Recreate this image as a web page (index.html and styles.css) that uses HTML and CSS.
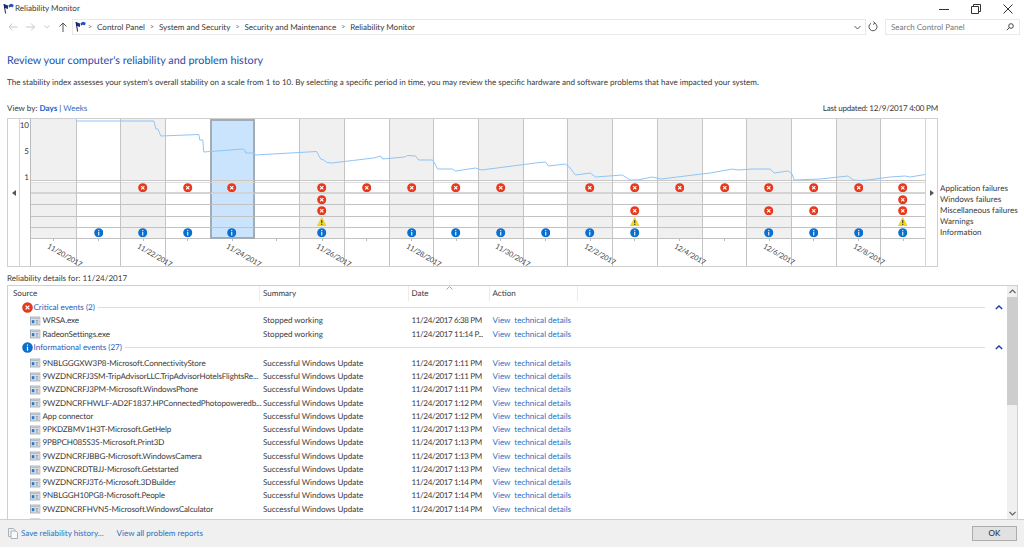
FILE: index.html
```html
<!DOCTYPE html>
<html lang="en">
<head>
<meta charset="utf-8">
<title>Reliability Monitor</title>
<link rel="stylesheet" href="styles.css">
</head>
<body>
<svg class="defs" width="0" height="0" aria-hidden="true">
  <defs>
    <symbol id="err" viewBox="0 0 10 10"><circle cx="5" cy="5" r="4.8" fill="#e8391d"/><path d="M3.300 3.300l3.400 3.400M6.700 3.300L3.300 6.700" stroke="#fff" stroke-width="1.200"/></symbol>
    <symbol id="inf" viewBox="0 0 10 10"><circle cx="5" cy="5" r="4.8" fill="#0a70d0"/><path d="M5 2.200v1.200M5 4.300v3.600" stroke="#fff" stroke-width="1.100"/></symbol>
    <symbol id="war" viewBox="0 0 10 10"><path d="M5 .4L9.800 9.600H.2z" fill="#f6d90f" stroke="#d8b400" stroke-width=".4"/><path d="M5 3.200v3.400M5 7.400v1.100" stroke="#333" stroke-width="1.100"/></symbol>
    <symbol id="flag" viewBox="0 0 12 11"><path d="M2 1l4 1.500L6 6 2 4.700z" fill="#1c2f8e"/><path d="M6.500 2.300L9 .8l2.700 1-.7 2.400-2.400-.5-1.600 1z" fill="#2450b8"/><path d="M2 1l1.600 9.500" stroke="#16235f" stroke-width="1" fill="none"/></symbol>
    <symbol id="app" viewBox="0 0 12 10"><rect x=".5" y=".5" width="11" height="9" fill="#e4e8ee" stroke="#9aa3ad"/><rect x="1.500" y="1.500" width="9" height="1.400" fill="#b5bdc7"/><rect x="2" y="4" width="3" height="3.600" fill="#2c78c8"/><path d="M6.500 4.400h3M6.500 6h3M6.500 7.500h3" stroke="#8d97a3"/></symbol>
  </defs>
</svg>

<div class="titlebar">
  <div class="title-left"><svg class="flag"><use href="#flag"/></svg><span>Reliability Monitor</span></div>
  <div class="win-btns">
    <svg width="10" height="10" viewBox="0 0 10 10"><path d="M0 5.500h10" stroke="#333"/></svg>
    <svg width="10" height="10" viewBox="0 0 10 10"><path d="M.5 2.500h7v7h-7zM2.500 2.500v-2h7v7h-2" fill="none" stroke="#333"/></svg>
    <svg width="10" height="10" viewBox="0 0 10 10"><path d="M.5.5l9 9M9.500.5l-9 9" stroke="#333"/></svg>
  </div>
</div>

<div class="navbar">
  <div class="nav-btns">
    <svg width="10" height="10" viewBox="0 0 10 10"><path d="M1 5h8.500M4.500 1.500L1 5l3.500 3.500" fill="none" stroke="#c8c8c8"/></svg>
    <svg width="10" height="10" viewBox="0 0 10 10"><path d="M0 5h8.500M5 1.500L8.500 5 5 8.500" fill="none" stroke="#c8c8c8"/></svg>
    <svg width="6" height="6" viewBox="0 0 6 6"><path d="M.5 1.500L3 4l2.500-2.500" fill="none" stroke="#c8c8c8"/></svg>
    <svg width="10" height="10" viewBox="0 0 10 10"><path d="M5 10V1M1.500 4.500L5 1l3.500 3.500" fill="none" stroke="#555"/></svg>
  </div>
  <div class="address">
    <svg class="flag"><use href="#flag"/></svg>
    <span class="sep">&gt;</span><span>Control Panel</span>
    <span class="sep">&gt;</span><span>System and Security</span>
    <span class="sep">&gt;</span><span>Security and Maintenance</span>
    <span class="sep">&gt;</span><span>Reliability Monitor</span>
    <svg class="addr-drop" width="7" height="5" viewBox="0 0 7 5"><path d="M.5 1L3.500 4l3-3" fill="none" stroke="#555"/></svg>
  </div>
  <svg class="refresh" width="10" height="11" viewBox="0 0 10 11"><path d="M3 2.300a4 4 0 1 0 4 0M5.500 .5L7 2.300 5 3.500" fill="none" stroke="#555"/></svg>
  <div class="search"><span>Search Control Panel</span>
    <svg width="8" height="8" viewBox="0 0 8 8"><circle cx="5" cy="3" r="2.300" fill="none" stroke="#444"/><path d="M3.300 4.700L.8 7.200" stroke="#444"/></svg>
  </div>
</div>

<main class="content">
  <h1 class="heading">Review your computer's reliability and problem history</h1>
  <p class="intro">The stability index assesses your system's overall stability on a scale from 1 to 10. By selecting a specific period in time, you may review the specific hardware and software problems that have impacted your system.</p>
  <div class="viewby">
    <div>View by: <a class="link strong">Days</a> | <a class="link">Weeks</a></div>
    <div class="updated">Last updated: 12/9/2017 4:00 PM</div>
  </div>

  <div class="chart-row">
    <div class="chart">
      <div class="arrow-col"><svg width="4" height="6" viewBox="0 0 4 6"><path d="M4 0v6L0 3z" fill="#555"/></svg></div>
      <div class="yaxis"><span>10</span><span>5</span><span>1</span></div>
      <div class="plot">
        <div class="col g"><div class="gr"></div><div class="band"></div><div class="cell"></div><div class="cell"></div><div class="cell"></div><div class="cell"></div><div class="cell"></div><div class="dt"><i></i><span>11/20/2017</span></div></div>
        <div class="col"><div class="gr"></div><div class="band"></div><div class="cell"></div><div class="cell"></div><div class="cell"></div><div class="cell"></div><div class="cell"><svg><use href="#inf"/></svg></div><div class="dt"><i></i></div></div>
        <div class="col g"><div class="gr"></div><div class="band"></div><div class="cell"><svg><use href="#err"/></svg></div><div class="cell"></div><div class="cell"></div><div class="cell"></div><div class="cell"><svg><use href="#inf"/></svg></div><div class="dt"><i></i><span>11/22/2017</span></div></div>
        <div class="col"><div class="gr"></div><div class="band"></div><div class="cell"><svg><use href="#err"/></svg></div><div class="cell"></div><div class="cell"></div><div class="cell"></div><div class="cell"><svg><use href="#inf"/></svg></div><div class="dt"><i></i></div></div>
        <div class="col sel"><div class="gr"></div><div class="band"></div><div class="cell"><svg><use href="#err"/></svg></div><div class="cell"></div><div class="cell"></div><div class="cell"></div><div class="cell"><svg><use href="#inf"/></svg></div><div class="dt"><i></i><span>11/24/2017</span></div></div>
        <div class="col"><div class="gr"></div><div class="band"></div><div class="cell"></div><div class="cell"></div><div class="cell"></div><div class="cell"></div><div class="cell"></div><div class="dt"><i></i></div></div>
        <div class="col g"><div class="gr"></div><div class="band"></div><div class="cell"><svg><use href="#err"/></svg></div><div class="cell"><svg><use href="#err"/></svg></div><div class="cell"><svg><use href="#err"/></svg></div><div class="cell"><svg><use href="#war"/></svg></div><div class="cell"><svg><use href="#inf"/></svg></div><div class="dt"><i></i><span>11/26/2017</span></div></div>
        <div class="col"><div class="gr"></div><div class="band"></div><div class="cell"><svg><use href="#err"/></svg></div><div class="cell"></div><div class="cell"></div><div class="cell"></div><div class="cell"></div><div class="dt"><i></i></div></div>
        <div class="col g"><div class="gr"></div><div class="band"></div><div class="cell"><svg><use href="#err"/></svg></div><div class="cell"></div><div class="cell"></div><div class="cell"></div><div class="cell"><svg><use href="#inf"/></svg></div><div class="dt"><i></i><span>11/28/2017</span></div></div>
        <div class="col"><div class="gr"></div><div class="band"></div><div class="cell"><svg><use href="#err"/></svg></div><div class="cell"></div><div class="cell"></div><div class="cell"></div><div class="cell"><svg><use href="#inf"/></svg></div><div class="dt"><i></i></div></div>
        <div class="col g"><div class="gr"></div><div class="band"></div><div class="cell"><svg><use href="#err"/></svg></div><div class="cell"></div><div class="cell"></div><div class="cell"></div><div class="cell"><svg><use href="#inf"/></svg></div><div class="dt"><i></i><span>11/30/2017</span></div></div>
        <div class="col"><div class="gr"></div><div class="band"></div><div class="cell"></div><div class="cell"></div><div class="cell"></div><div class="cell"></div><div class="cell"><svg><use href="#inf"/></svg></div><div class="dt"><i></i></div></div>
        <div class="col g"><div class="gr"></div><div class="band"></div><div class="cell"><svg><use href="#err"/></svg></div><div class="cell"></div><div class="cell"></div><div class="cell"></div><div class="cell"><svg><use href="#inf"/></svg></div><div class="dt"><i></i><span>12/2/2017</span></div></div>
        <div class="col"><div class="gr"></div><div class="band"></div><div class="cell"><svg><use href="#err"/></svg></div><div class="cell"></div><div class="cell"><svg><use href="#err"/></svg></div><div class="cell"><svg><use href="#war"/></svg></div><div class="cell"><svg><use href="#inf"/></svg></div><div class="dt"><i></i></div></div>
        <div class="col g"><div class="gr"></div><div class="band"></div><div class="cell"><svg><use href="#err"/></svg></div><div class="cell"></div><div class="cell"></div><div class="cell"></div><div class="cell"></div><div class="dt"><i></i><span>12/4/2017</span></div></div>
        <div class="col"><div class="gr"></div><div class="band"></div><div class="cell"><svg><use href="#err"/></svg></div><div class="cell"></div><div class="cell"></div><div class="cell"></div><div class="cell"></div><div class="dt"><i></i></div></div>
        <div class="col g"><div class="gr"></div><div class="band"></div><div class="cell"><svg><use href="#err"/></svg></div><div class="cell"></div><div class="cell"><svg><use href="#err"/></svg></div><div class="cell"></div><div class="cell"><svg><use href="#inf"/></svg></div><div class="dt"><i></i><span>12/6/2017</span></div></div>
        <div class="col"><div class="gr"></div><div class="band"></div><div class="cell"><svg><use href="#err"/></svg></div><div class="cell"></div><div class="cell"><svg><use href="#err"/></svg></div><div class="cell"></div><div class="cell"><svg><use href="#inf"/></svg></div><div class="dt"><i></i></div></div>
        <div class="col g"><div class="gr"></div><div class="band"></div><div class="cell"><svg><use href="#err"/></svg></div><div class="cell"></div><div class="cell"></div><div class="cell"></div><div class="cell"><svg><use href="#inf"/></svg></div><div class="dt"><i></i><span>12/8/2017</span></div></div>
        <div class="col"><div class="gr"></div><div class="band"></div><div class="cell"><svg><use href="#err"/></svg></div><div class="cell"><svg><use href="#err"/></svg></div><div class="cell"><svg><use href="#err"/></svg></div><div class="cell"><svg><use href="#war"/></svg></div><div class="cell"><svg><use href="#inf"/></svg></div><div class="dt"><i></i></div></div>
        <svg class="stability" viewBox="0 0 895 62" preserveAspectRatio="none"><polyline fill="none" stroke="#90c4f5" stroke-width="1" points="45,2 123,2 125,10 127,10 130,17 168,15.500 169,21 172,21 173,33 212,30 214,31 215,34 224,34 224,36 286,32.500 290,40 293,41 296,43.500 301,44 322,41.500 343,39 350,37 352,40 374,38 377,36.500 385,37 388,41 402,41 404,44 407,50 422,50 425,52 445,49 451,51 505,44 515,43 518,47 535,45 539,48 545,56 560,54 565,58 592,56 600,61 607,61 622,58 631,60 655,57 680,54 702,50 708,51 722,50 740,50 744,54 758,52 762,55 764,61 790,60 818,57 823,61 830,61.500 838,61 860,58 875,57 880,58 895,55.500"/></svg>
      </div>
      <div class="arrow-col end"><svg width="4" height="6" viewBox="0 0 4 6"><path d="M0 0v6l4-3z" fill="#555"/></svg></div>
    </div>
    <ul class="legend">
      <li>Application failures</li>
      <li>Windows failures</li>
      <li>Miscellaneous failures</li>
      <li>Warnings</li>
      <li>Information</li>
    </ul>
  </div>

  <div class="details-label">Reliability details for: 11/24/2017</div>

  <div class="list">
    <div class="list-main">
      <div class="lhead">
        <div class="c1">Source</div><div class="c2">Summary</div>
        <div class="c3">Date<svg class="sort" width="7" height="4" viewBox="0 0 7 4"><path d="M.5 3.500L3.500 .5l3 3" fill="none" stroke="#aaa"/></svg></div>
        <div class="c4">Action</div>
      </div>
      <div class="group gfirst"><svg><use href="#err"/></svg><span>Critical events (2)</span><hr><svg class="chev" width="8" height="5" viewBox="0 0 8 5"><path d="M.8 4L4 1l3.200 3" fill="none" stroke="#1e3ea8" stroke-width="1.500"/></svg></div>
      <div class="row"><div class="c1"><svg><use href="#app"/></svg><span>WRSA.exe</span></div><div class="c2">Stopped working</div><div class="c3">11/24/2017 6:38 PM</div><div class="c4"><a class="link">View</a> <a class="link">technical details</a></div></div>
      <div class="row"><div class="c1"><svg><use href="#app"/></svg><span>RadeonSettings.exe</span></div><div class="c2">Stopped working</div><div class="c3">11/24/2017 11:14 P...</div><div class="c4"><a class="link">View</a> <a class="link">technical details</a></div></div>
      <div class="group"><svg><use href="#inf"/></svg><span>Informational events (27)</span><hr><svg class="chev" width="8" height="5" viewBox="0 0 8 5"><path d="M.8 4L4 1l3.200 3" fill="none" stroke="#1e3ea8" stroke-width="1.500"/></svg></div>
      <div class="row"><div class="c1"><svg><use href="#app"/></svg><span>9NBLGGGXW3P8-Microsoft.ConnectivityStore</span></div><div class="c2">Successful Windows Update</div><div class="c3">11/24/2017 1:11 PM</div><div class="c4"><a class="link">View</a> <a class="link">technical details</a></div></div>
      <div class="row"><div class="c1"><svg><use href="#app"/></svg><span>9WZDNCRFJ3SM-TripAdvisorLLC.TripAdvisorHotelsFlightsRe...</span></div><div class="c2">Successful Windows Update</div><div class="c3">11/24/2017 1:11 PM</div><div class="c4"><a class="link">View</a> <a class="link">technical details</a></div></div>
      <div class="row"><div class="c1"><svg><use href="#app"/></svg><span>9WZDNCRFJ3PM-Microsoft.WindowsPhone</span></div><div class="c2">Successful Windows Update</div><div class="c3">11/24/2017 1:11 PM</div><div class="c4"><a class="link">View</a> <a class="link">technical details</a></div></div>
      <div class="row"><div class="c1"><svg><use href="#app"/></svg><span>9WZDNCRFHWLF-AD2F1837.HPConnectedPhotopoweredb...</span></div><div class="c2">Successful Windows Update</div><div class="c3">11/24/2017 1:12 PM</div><div class="c4"><a class="link">View</a> <a class="link">technical details</a></div></div>
      <div class="row"><div class="c1"><svg><use href="#app"/></svg><span>App connector</span></div><div class="c2">Successful Windows Update</div><div class="c3">11/24/2017 1:12 PM</div><div class="c4"><a class="link">View</a> <a class="link">technical details</a></div></div>
      <div class="row"><div class="c1"><svg><use href="#app"/></svg><span>9PKDZBMV1H3T-Microsoft.GetHelp</span></div><div class="c2">Successful Windows Update</div><div class="c3">11/24/2017 1:13 PM</div><div class="c4"><a class="link">View</a> <a class="link">technical details</a></div></div>
      <div class="row"><div class="c1"><svg><use href="#app"/></svg><span>9PBPCH085S3S-Microsoft.Print3D</span></div><div class="c2">Successful Windows Update</div><div class="c3">11/24/2017 1:13 PM</div><div class="c4"><a class="link">View</a> <a class="link">technical details</a></div></div>
      <div class="row"><div class="c1"><svg><use href="#app"/></svg><span>9WZDNCRFJBBG-Microsoft.WindowsCamera</span></div><div class="c2">Successful Windows Update</div><div class="c3">11/24/2017 1:13 PM</div><div class="c4"><a class="link">View</a> <a class="link">technical details</a></div></div>
      <div class="row"><div class="c1"><svg><use href="#app"/></svg><span>9WZDNCRDTBJJ-Microsoft.Getstarted</span></div><div class="c2">Successful Windows Update</div><div class="c3">11/24/2017 1:13 PM</div><div class="c4"><a class="link">View</a> <a class="link">technical details</a></div></div>
      <div class="row"><div class="c1"><svg><use href="#app"/></svg><span>9WZDNCRFJ3T6-Microsoft.3DBuilder</span></div><div class="c2">Successful Windows Update</div><div class="c3">11/24/2017 1:14 PM</div><div class="c4"><a class="link">View</a> <a class="link">technical details</a></div></div>
      <div class="row"><div class="c1"><svg><use href="#app"/></svg><span>9NBLGGH10PG8-Microsoft.People</span></div><div class="c2">Successful Windows Update</div><div class="c3">11/24/2017 1:14 PM</div><div class="c4"><a class="link">View</a> <a class="link">technical details</a></div></div>
      <div class="row"><div class="c1"><svg><use href="#app"/></svg><span>9WZDNCRFHVN5-Microsoft.WindowsCalculator</span></div><div class="c2">Successful Windows Update</div><div class="c3">11/24/2017 1:14 PM</div><div class="c4"><a class="link">View</a> <a class="link">technical details</a></div></div>
      <div class="row"><div class="c1"><svg><use href="#app"/></svg></div></div>
    </div>
    <div class="scrollbar">
      <div class="sb-btn"><svg width="7" height="5" viewBox="0 0 7 5"><path d="M.5 4L3.500 1l3 3" fill="none" stroke="#666" stroke-width="1.200"/></svg></div>
      <div class="sb-thumb"></div>
      <div class="sb-track"></div>
      <div class="sb-btn"><svg width="7" height="5" viewBox="0 0 7 5"><path d="M.5 1L3.500 4l3-3" fill="none" stroke="#666" stroke-width="1.200"/></svg></div>
    </div>
  </div>
</main>

<footer class="footer">
  <div class="foot-links">
    <svg width="10" height="11" viewBox="0 0 10 11"><path d="M.5.5h5l2 2v6h-7z" fill="#eef0f3" stroke="#a9b1bb"/><path d="M3 3h5l1.500 1.500v6H3z" fill="#f8f9fb" stroke="#a9b1bb"/></svg>
    <a class="link">Save reliability history...</a>
    <a class="link">View all problem reports</a>
  </div>
  <button class="ok" type="button">OK</button>
</footer>
</body>
</html>
```

FILE: styles.css
```css
* { box-sizing: border-box; }
html, body { height: 100%; }
body {
  margin: 0;
  width: 1024px;
  height: 548px;
  overflow: hidden;
  background: #fff;
  color: #3a3a3a;
  font-family: Lato, "Noto Sans", "Liberation Sans", sans-serif;
  font-size: 8.070px;
  line-height: 13px;
  text-rendering: geometricPrecision;
  display: flex;
  flex-direction: column;
}
.defs { position: absolute; }
.link { color: #2a72c4; }
.strong { font-weight: 700; color: #0a66cc; }

.titlebar { height: 18px; flex: none; display: flex; justify-content: space-between; align-items: center; padding: 0 11px 1px 2px; }
.title-left { display: flex; align-items: center; gap: 1px; }
.flag { width: 12px; height: 11px; flex: none; }
.win-btns { display: flex; gap: 22px; }

.navbar { height: 17px; flex: none; display: flex; align-items: center; padding: 0 6px 0 8px; }
.nav-btns { width: 64px; flex: none; display: flex; align-items: center; gap: 8px; }
.address { width: 794px; height: 16px; flex: none; border: 1px solid #e9e9e9; display: flex; align-items: center; padding: 1px 4px 0 1px; }
.address .flag { margin: -1px -3px 0 0; }
.address .sep { width: 14px; text-align: center; font-size: 7px; color: #666; }
.addr-drop { margin-left: auto; }
.refresh { margin: 0 7px 0 2px; flex: none; }
.search { width: 135px; height: 16px; flex: none; border: 1px solid #e9e9e9; display: flex; justify-content: space-between; align-items: center; padding: 1px 5px 0 5px; color: #777; }

.content { flex: 1; min-height: 0; padding: 0 6px 0 7px; display: flex; flex-direction: column; }
.heading { margin: 18px 0 0; font-size: 10.800px; line-height: 15px; font-weight: 400; color: #1a4da8; }
.intro { margin: 8px 0 0; line-height: 13px; }
.viewby { margin-top: 13px; width: 931px; display: flex; justify-content: space-between; height: 13px; }
.updated { letter-spacing: -.23px; }

.chart-row { display: flex; margin-top: 3px; height: 149px; flex: none; }
.chart { width: 931px; flex: none; border: 1px solid #cfcfcf; display: flex; }
.arrow-col { width: 12px; flex: none; border-right: 1px solid #d5d5d5; display: flex; justify-content: center; padding-top: 71px; }
.arrow-col.end { border-right: 0; border-left: 1px solid #d5d5d5; }
.yaxis { width: 11px; flex: none; border-right: 1px solid #bbb; display: flex; flex-direction: column; align-items: flex-end; padding: 0 1px 0 0; gap: 13px; }
.plot { position: relative; flex: 1; min-width: 0; display: grid; grid-template-columns: repeat(20, 1fr); }
.col { display: flex; flex-direction: column; border-left: 1px solid #c4c4c4; min-width: 0; }
.col:first-child { border-left: 0; }
.col.g > .gr, .col.g > .cell { background: #f0f0f0; }
.gr { height: 62px; flex: none; border-bottom: 1px solid #c8c8c8; }
.band { height: 2px; flex: none; border-bottom: 1px solid #ddd; }
.cell { height: 11.200px; flex: none; border-bottom: 1px solid #c2c2c2; display: flex; align-items: center; justify-content: center; }
.cell:nth-child(3) { border-bottom-width: 2px; border-bottom-color: #d4d4d4; }
.cell svg { width: 9.500px; height: 9.500px; display: block; flex: none; }
.col.sel { z-index: 1; border-left: 0; position: relative; }
.col.sel > .gr, .col.sel > .cell, .col.sel > .band { background: #cbe4fd; }
.col.sel > .gr { border-top: 2px solid #a3acb5; }
.col.sel > .gr, .col.sel > .band, .col.sel > .cell { border-left: 2px solid #a3acb5; border-right: 2px solid #a3acb5; }
.col.sel > .cell:nth-child(7) { border-bottom: 2px solid #a3acb5; }
.col.sel + .col { border-left: 0; }
.dt { flex: 1; position: relative; }
.dt i { display: block; width: 1px; height: 2px; background: #bbb; margin: 0 auto; }
.dt span { position: absolute; left: 17px; top: 2px; font-size: 7.200px; line-height: 9px; letter-spacing: -.1px; white-space: nowrap; transform: rotate(30deg); transform-origin: left center; color: #444; }
.stability { position: absolute; left: 0; top: 0; width: 100%; height: 62px; z-index: 2; overflow: visible; }

.legend { list-style: none; margin: 0; padding: 65px 0 0 2px; line-height: 11.100px; white-space: nowrap; }

.details-label { margin-top: 5px; height: 13px; }

.list { height: 234px; width: 1011px; flex: none; border-top: 1px solid #cfcfcf; border-left: 1px solid #cfcfcf; border-right: 1px solid #cfcfcf; display: flex; overflow: hidden; }
.list-main { flex: 1; min-width: 0; overflow: hidden; }
.lhead, .row { display: grid; grid-template-columns: 252px 148.500px 81px 88px; }
.lhead { height: 14.500px; }
.lhead > div { border-right: 1px solid #ececec; padding-left: 3px; line-height: 14px; position: relative; }
.lhead .c1 { padding-left: 5px; }
.sort { position: absolute; left: 37px; top: 0; }
.row { height: 13.270px; line-height: 13.270px; white-space: nowrap; }
.row > div { padding-left: 3px; }
.row .c1 { padding-left: 22px; display: flex; align-items: center; gap: 2px; letter-spacing: -.12px; }
.row .c1 svg { width: 10.500px; height: 10px; flex: none; }
.row .c3 { letter-spacing: -.38px; }
.row .c4 .link + .link { margin-left: 2px; }
.group { display: flex; align-items: center; height: 13.300px; padding-left: 14px; color: #2a5db8; }
.group > svg:first-child { width: 11px; height: 11px; flex: none; margin-right: .5px; }
.group hr { flex: 1; height: 1px; margin: 0 10px 0 3px; border: 0; background: #d3dff0; }
.chev { margin-right: 4px; flex: none; }
.group span { white-space: nowrap; }
.gfirst + .row { margin-top: .5px; }
.row + .group { margin-top: .3px; }
.row + .group + .row { margin-top: 2.400px; }
.scrollbar { width: 10px; flex: none; display: flex; flex-direction: column; background: #f0f0f0; }
.sb-btn { height: 11px; flex: none; display: flex; align-items: center; justify-content: center; background: #f0f0f0; }
.sb-thumb { height: 108px; flex: none; background: #cdcdcd; }
.sb-track { flex: 1; }

.footer { height: 28px; flex: none; margin-bottom: 1px; background: #f0f0f0; border-top: 1px solid #cfcfcf; display: flex; align-items: center; justify-content: space-between; padding: 0 7px 0 8px; }
.foot-links { display: flex; align-items: center; }
.foot-links svg { margin-right: 3px; }
.foot-links .link + .link { margin-left: 13px; }
.ok { width: 45px; height: 15px; padding: 0; background: #e1e1e1; border: 1px solid #adadad; font: inherit; color: #222; line-height: 13px; }
```
